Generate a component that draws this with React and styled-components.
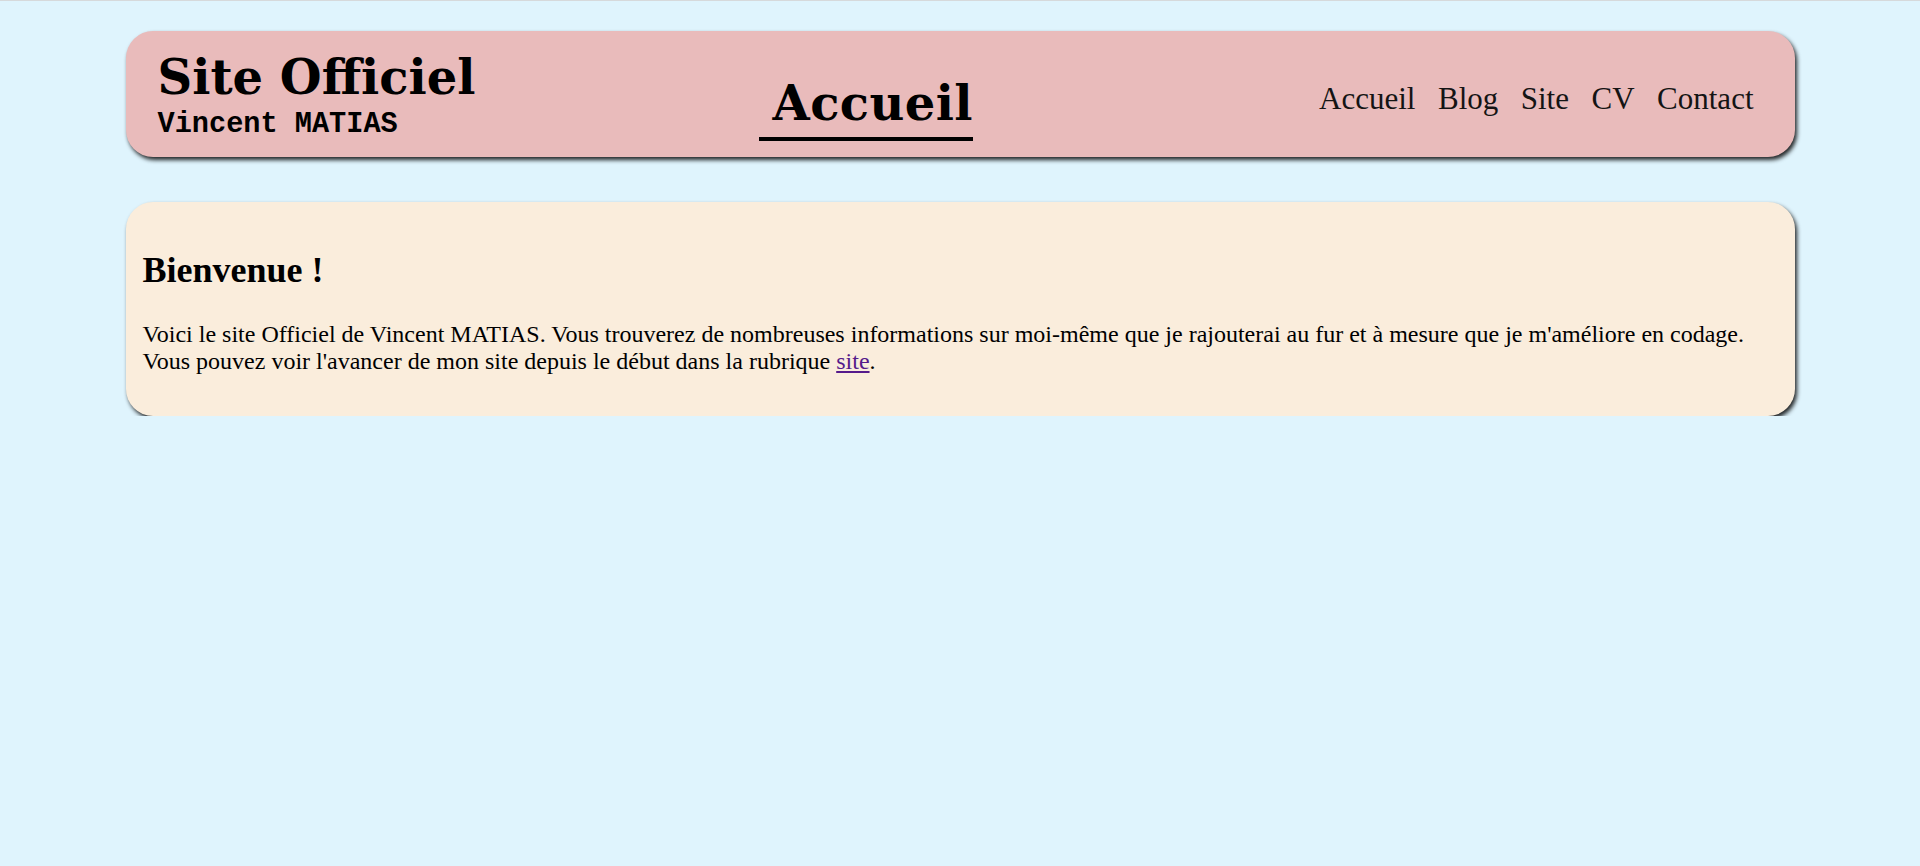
import React from 'react';
import styled, { createGlobalStyle } from 'styled-components';

const GlobalStyle = createGlobalStyle`
  html, body {
    margin: 0;
    padding: 0;
  }
  body {
    background-color: #dff4fd;
    border-top: 1px solid #d6d9db;
    font-family: 'Liberation Serif', 'Times New Roman', serif;
    font-size: 24px;
    color: black;
  }
`;

const Page = styled.div`
  width: 1669px;
  margin: 0 auto;
  padding-top: 30px;
`;

const Header = styled.header`
  display: flex;
  align-items: flex-start;
  height: 126px;
  box-sizing: border-box;
  padding: 0 41px 0 32px;
  background-color: #e9bbbb;
  border-radius: 27px;
  box-shadow: 2px 3px 4px rgba(0, 0, 0, 0.85);
`;

const Brand = styled.div`
  flex: 0 0 601px;
  margin-top: 22px;
`;

const Title = styled.h1`
  margin: 0;
  font-family: 'DejaVu Serif', Georgia, serif;
  font-weight: bold;
  font-size: 48px;
  line-height: 48px;
`;

const Subtitle = styled.div`
  margin-top: 10px;
  font-family: 'Liberation Mono', 'Courier New', monospace;
  font-weight: bold;
  font-size: 28.6px;
  line-height: 28px;
`;

const PageName = styled.div`
  margin-top: 48px;
  padding: 0 0 10px 14px;
  border-bottom: 4px solid black;
  font-family: 'DejaVu Serif', Georgia, serif;
  font-weight: bold;
  font-size: 48px;
  line-height: 48px;
  letter-spacing: 0.4px;
`;

const Nav = styled.nav`
  display: flex;
  gap: 22.5px;
  margin-left: auto;
  margin-top: 50px;
`;

const NavLink = styled.a`
  font-family: 'Liberation Serif', 'Times New Roman', serif;
  font-size: 31px;
  line-height: 36px;
  color: #141414;
  text-decoration: none;
`;

const Card = styled.section`
  margin-top: 45px;
  padding: 17px;
  background-color: #faeddc;
  border-radius: 27px;
  box-shadow: 2px 3px 4px rgba(0, 0, 0, 0.85);
`;

const Heading = styled.h2`
  margin: 30px 0;
  font-size: 36px;
  font-weight: bold;
`;

const Text = styled.p`
  margin: 24px 0;
`;

const InlineLink = styled.a`
  color: #551a8b;
`;

const links = ['Accueil', 'Blog', 'Site', 'CV', 'Contact'];

const App = () => {
  return (
    <>
      <GlobalStyle />
      <Page>
        <Header>
          <Brand>
            <Title>Site Officiel</Title>
            <Subtitle>Vincent MATIAS</Subtitle>
          </Brand>
          <PageName>Accueil</PageName>
          <Nav>
            {links.map((l) => (
              <NavLink key={l} href="#">{l}</NavLink>
            ))}
          </Nav>
        </Header>
        <Card>
          <Heading>Bienvenue !</Heading>
          <Text>
            Voici le site Officiel de Vincent MATIAS. Vous trouverez de nombreuses informations sur moi-même que je rajouterai au fur et à mesure que je m'améliore en codage.
            Vous pouvez voir l'avancer de mon site depuis le début dans la rubrique <InlineLink href="#">site</InlineLink>.
          </Text>
        </Card>
      </Page>
    </>
  );
};

export default App;
